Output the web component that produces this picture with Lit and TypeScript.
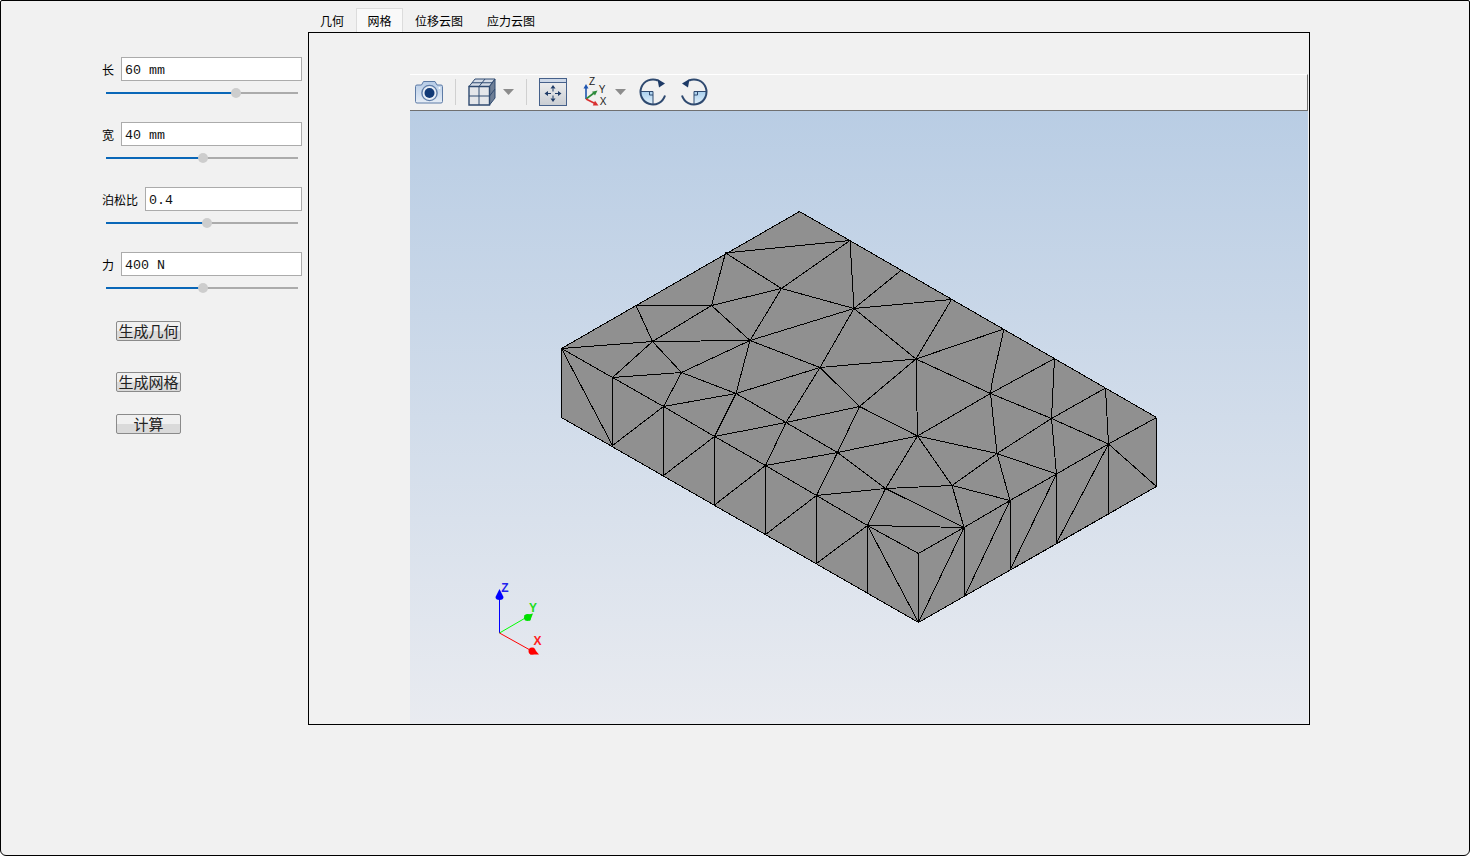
import { LitElement, html, css, svg } from 'lit';
import { customElement, state } from 'lit/decorators.js';

// mesh vertices, in page coordinates (the svg viewBox uses the same ones)
const V: Record<string, [number, number]> = {
	T: [799.5, 211.5], R: [1156.5, 417.5], Rb: [1156.5, 486.5], F: [918.5, 622.5], Lb: [561.5, 417.5], L: [561.5, 348.5],
	C: [918.5, 553.5],
	A1: [850, 240.5], A2: [725.5, 253], A3: [636, 305.5], B1: [901.5, 270], B2: [951.5, 299.5], B3: [1004, 329],
	B3m: [992.5, 380], B4: [1054.5, 358.5], B5: [1105.5, 388],
	N1: [781.5, 288.5], N2: [854, 308.5], N3: [711.5, 305.5], N4: [750, 340.5], N5: [652.5, 341.5], N6: [820, 367.5],
	N7: [681.5, 372.5], N8: [612.5, 377.5], N9: [736, 393.5], N10: [663.5, 406.5], N11: [859.5, 406.5], N12: [786, 422.5],
	N13: [714.5, 436.5], N14: [916, 359], N15: [990.5, 393.5], N16: [1051.5, 418.5], N17: [1108.5, 444], N18: [917.5, 436],
	N19: [997, 453.5], N20: [1056.5, 474], N21: [1010, 500.5], N22: [952, 485.5], N23: [964, 527.5], N24: [765.5, 465.5],
	N25: [816.5, 495.5], N26: [867.5, 525.5], N27: [837.5, 452.5], N28: [885.5, 488.5],
	b1: [612.5, 445.5], b2: [663.5, 475.5], b3: [714.5, 505], b4: [765.5, 534.5], b5: [816.5, 563.5], b6: [867.5, 592.5],
	b7: [964.5, 596.5], b8: [1010, 570], b9: [1056.5, 543], b10: [1108.5, 513],
};

const EDGES = `T-R T-L L-Lb Lb-F F-Rb Rb-R L-N8 N8-N10 N10-N13 N13-N24 N24-N25 N25-N26 N26-C C-N23 N23-N21 N21-N20 N20-N17 N17-R
L-N5 L-b1 N8-b1 N8-N5 N8-N7 N5-N7 N5-N4 N5-A3 A3-N3 N3-N5 N3-A2 N3-N4 N3-N1 A2-N1 A2-A1 N1-A1 N1-N2 N1-N4 N2-A1 N4-N2
N4-N7 N4-N6 N4-N9 N7-N9 N7-N10 N10-N9 N9-N6 N9-N12 N9-N13 N6-N12 N6-N11 N12-N11 N2-N6 N6-N14 N11-N14 N11-N18 N2-N14
N2-B1 N2-B2 N14-B2 N14-B3 N14-N15 N14-N18 B3-B3m B3m-N15 N15-B4 N15-N16 N15-N18 N15-N19 N16-B4 N16-B5 N17-B5 N16-N17
N18-N19 N19-N16 N19-N20 N16-N20 N19-N22 N19-N21 N22-N21 N22-N23 N18-N22 N18-N28 N18-N27 N28-N23 N28-N22 N28-N26 N27-N28
N27-N25 N27-N12 N27-N24 N27-N11 N12-N24 N12-N13 N25-N28 N26-N23 N10-b1 N10-b2 N13-b2 N13-b3 N24-b3 N24-b4 N25-b4 N25-b5
N26-b5 N26-b6 N26-F C-F N23-F N23-b7 N21-b7 N21-b8 N20-b8 N20-b9 N17-b9 N17-b10 N17-Rb`
	.split(/\s+/)
	.map((e) => e.split('-'));

const SLIDERS = [
	{ label: '长', value: '60 mm', pos: 67.7 },
	{ label: '宽', value: '40 mm', pos: 50.5 },
	{ label: '泊松比', value: '0.4', pos: 52.6 },
	{ label: '力', value: '400 N', pos: 50.5 },
];

const TABS = ['几何', '网格', '位移云图', '应力云图'];

const NAVY = '#2f4a70';

const rotateIcon = (mirror: boolean) => svg`
	<svg class="icon" viewBox="0 0 28 28">
		<defs>
			<linearGradient id="q${mirror ? 'm' : 'n'}" x1="0" y1="0" x2="0" y2="1">
				<stop offset="0" stop-color="#a9d0ee" />
				<stop offset="1" stop-color="#e4f1fa" />
			</linearGradient>
		</defs>
		<g transform=${mirror ? 'translate(28 0) scale(-1 1)' : 'translate(0 0)'}>
			<path d="M1.5 13.5H14V26.5A12.5 12.5 0 0 1 1.5 13.5Z" fill="url(#q${mirror ? 'm' : 'n'})" />
			<path d="M26 17.5A12.5 12.5 0 1 1 19 2.5" fill="none" stroke=${NAVY} stroke-width="2" />
			<path d="M1.5 13.5H14V26M10.5 13.5V17H14" fill="none" stroke=${NAVY} stroke-width="1" />
			<path d="M18.5 1L26 5.5L20 9.5Z" fill="#1d3a66" />
		</g>
	</svg>`;

@customElement('app-root')
export class AppRoot extends LitElement {
	static styles = css`
		:host {
			display: block;
			width: 1470px;
			height: 856px;
			font-family: 'Noto Sans CJK SC', 'Liberation Sans', sans-serif;
		}

		.window {
			box-sizing: border-box;
			display: flex;
			width: 1470px;
			height: 856px;
			background: #f1f1f1;
			border: 1px solid #000;
			border-radius: 2px 2px 6px 6px;
			padding-top: 7px;
		}

		.side {
			box-sizing: border-box;
			width: 307px;
			padding: 49px 6px 0 101px;
		}

		.group {
			margin-bottom: 28px;
		}

		.row {
			display: flex;
			align-items: center;
			gap: 7px;
			height: 24px;
			font-size: 12px;
			line-height: 24px;
			color: #000;
		}

		.row span {
			margin-top: 2px;
		}

		.row input {
			flex: 1;
			min-width: 0;
			box-sizing: border-box;
			height: 24px;
			padding: 3px 3px 1px;
			border: 1px solid #ababab;
			outline: 1px solid #fff;
			outline-offset: -2px;
			background: #fff;
			font-family: 'Liberation Mono', monospace;
			font-size: 13.33px;
			color: #111;
			border-radius: 0;
		}

		.slider {
			position: relative;
			height: 2px;
			margin: 11px 4px 0;
			background: #ababab;
		}

		.fill {
			height: 2px;
			background: #0a67b8;
		}

		.thumb {
			position: absolute;
			top: -4px;
			width: 10px;
			height: 10px;
			margin-left: -5px;
			border-radius: 50%;
			background: #cdcdcd;
		}

		.btns {
			display: flex;
			flex-direction: column;
			align-items: flex-start;
			padding: 4px 0 0 14px;
		}

		.btns button {
			box-sizing: border-box;
			width: 65px;
			height: 20px;
			padding: 0;
			border: 1px solid #8a8a8a;
			border-radius: 2px;
			background: linear-gradient(#f0f0f0 0 50%, #dadada 50% 100%);
			font-family: inherit;
			font-size: 15px;
			font-weight: 400;
			line-height: 18px;
			color: #222;
		}

		.btn-mesh {
			margin-top: 31px;
		}

		.btn-calc {
			margin-top: 22px;
		}

		.main {
			width: 1002px;
		}

		.tabs {
			display: flex;
			height: 24px;
			font-size: 12px;
			line-height: 25px;
			color: #000;
		}

		.tab {
			padding: 0 12px;
			text-align: center;
			box-sizing: border-box;
		}

		.tab.on {
			background: #f9f9f9;
			border: 1px solid #dcdcdc;
			border-bottom: none;
			padding: 0 10.5px;
			line-height: 23px;
		}

		.frame {
			box-sizing: border-box;
			height: 693px;
			border: 1px solid #000;
			padding: 41px 0 0 101px;
		}

		.viewer {
			width: 898px;
		}

		.toolbar {
			box-sizing: border-box;
			display: flex;
			align-items: center;
			height: 37px;
			padding: 0 0 1px 5px;
			background: #f1f1f1;
			border-top: 1px solid #fff;
			border-right: 1px solid #707070;
			border-bottom: 1px solid #707070;
		}

		.icon {
			display: block;
			flex: none;
			width: 28px;
			height: 28px;
			overflow: visible;
		}

		.axes {
			width: 23px;
			margin-left: 17px;
		}

		.sep {
			flex: none;
			width: 1px;
			height: 26px;
			margin: 0 12px;
			background: #d0d0d0;
		}

		.caret {
			flex: none;
			width: 11px;
			height: 6px;
			margin-left: 7px;
			background: #8c8c8c;
			clip-path: polygon(0 0, 100% 0, 50% 100%);
		}

		.axes + .caret {
			margin-left: 8px;
		}

		.rot-a,
		.rot-b {
			flex: none;
			margin-left: 13px;
		}

		.canvas {
			height: 613px;
			background: linear-gradient(#b9cde4, #e9ebf0);
		}

		.canvas svg {
			display: block;
			width: 898px;
			height: 613px;
		}

		.triad text {
			font-family: 'Liberation Sans', sans-serif;
			font-size: 12px;
			font-weight: bold;
			text-anchor: middle;
		}

		.axes text {
			font-family: 'Liberation Sans', sans-serif;
			font-size: 10px;
			fill: #222;
			text-anchor: middle;
		}
	`;

	@state() tab = 1;

	renderMesh() {
		const outline = ['T', 'R', 'Rb', 'F', 'Lb', 'L'].map((k) => V[k].join(',')).join(' ');
		return svg`
			<polygon points=${outline} fill="#909090" />
			<g stroke="#000" stroke-width="1" shape-rendering="crispEdges">
				${EDGES.map(([a, b]) => svg`<line x1=${V[a][0]} y1=${V[a][1]} x2=${V[b][0]} y2=${V[b][1]} />`)}
			</g>`;
	}

	renderTriad() {
		return svg`
			<g class="triad">
				<path d="M499.5 633V596" stroke="#0000ff" stroke-width="1" />
				<path d="M499.5 589L503.5 597Q503.5 600 499.5 600Q495.5 600 495.5 597Z" fill="#0000ff" />
				<text x="505" y="592" fill="#2222ee">Z</text>
				<path d="M499.5 633L527 617" stroke="#00ff00" stroke-width="1" />
				<circle cx="527.5" cy="617.5" r="3.5" fill="#00e000" />
				<path d="M533 613.5L530 621L524 615.5Z" fill="#00e000" />
				<text x="533" y="611.5" fill="#22dd22">Y</text>
				<path d="M499.5 633L530 650" stroke="#ff0000" stroke-width="1" />
				<circle cx="532" cy="651" r="3.5" fill="#ff0000" />
				<path d="M539 654.5L530 654.5L533 647.5Z" fill="#ff0000" />
				<text x="537.5" y="645" fill="#ff2020">X</text>
			</g>`;
	}

	renderToolbar() {
		return html`<div class="toolbar">
			<svg class="icon" viewBox="0 0 28 28">
				<defs>
					<linearGradient id="cam" x1="0" y1="0" x2="0" y2="1">
						<stop offset="0" stop-color="#b5cbe6" />
						<stop offset="1" stop-color="#e6edf6" />
					</linearGradient>
				</defs>
				<path
					d="M2 7H6.5L8.5 3.5H20L22 7H26Q27.5 7 27.5 8.5V23.5Q27.5 25 26 25H2Q0.5 25 0.5 23.5V8.5Q0.5 7 2 7Z"
					fill="url(#cam)"
					stroke="#5d7ba6"
				/>
				<circle cx="14.5" cy="15" r="7.6" fill="#e8eef6" stroke="#5f7da8" stroke-width="1.4" />
				<circle cx="14.5" cy="15" r="5" fill="#123a76" />
				<circle cx="24.5" cy="10" r="1" fill="#fff" />
			</svg>
			<div class="sep"></div>
			<svg class="icon" viewBox="0 0 28 28">
				<path d="M1 8.5L7 1H27L21.5 8.5Z" fill="#d4dbe6" stroke=${NAVY} />
				<path d="M21.5 8.5L27 1V20L21.5 27Z" fill="#6f7f96" stroke=${NAVY} />
				<path d="M1 8.5H21.5V27H1Z" fill="#e4e6ea" stroke=${NAVY} stroke-width="1.4" />
				<path d="M11 8.5V27M1 18H21.5M4 4.75H24.5M11 8.5L17 1M21.5 18L27 11" fill="none" stroke=${NAVY} />
			</svg>
			<div class="caret"></div>
			<div class="sep"></div>
			<svg class="icon" viewBox="0 0 28 28">
				<defs>
					<linearGradient id="fit" x1="0" y1="0" x2="0" y2="1">
						<stop offset="0" stop-color="#f2f2f2" />
						<stop offset="1" stop-color="#c9cdd3" />
					</linearGradient>
				</defs>
				<rect x="0.5" y="0.5" width="27" height="27" fill="url(#fit)" stroke="#45608a" />
				<rect x="1" y="1" width="26" height="3.5" fill="#cdd8e8" />
				<path d="M1 4.5H27" stroke="#45608a" />
				<path
					d="M14 7L16.5 10.5H11.5ZM14 24L16.5 20.5H11.5ZM5.5 15.5L9 13V18ZM22.5 15.5L19 13V18Z"
					fill="#1f3c68"
				/>
				<path d="M14 10.5V13.5M14 17.5V20.5M9 15.5H12M16 15.5H19" stroke="#1f3c68" />
			</svg>
			<svg class="icon axes" viewBox="0 0 23 28">
				<path d="M2 21V9" stroke="#1f55b0" stroke-width="1.6" />
				<path d="M2 6L4.5 10.5H-0.5Z" fill="#1f55b0" />
				<path d="M2 21L10 15" stroke="#2e8b3c" stroke-width="1.6" />
				<path d="M13.5 12.5L11 17.5L8 13.8Z" fill="#2e8b3c" />
				<path d="M2 21L11 25.5" stroke="#d93030" stroke-width="1.6" />
				<path d="M14.5 27.5L8.8 27.5L11 22.8Z" fill="#d93030" />
				<text x="8" y="6.5">Z</text>
				<text x="18" y="14.5">Y</text>
				<text x="19" y="26.5">X</text>
			</svg>
			<div class="caret"></div>
			<div class="rot-a">${rotateIcon(false)}</div>
			<div class="rot-b">${rotateIcon(true)}</div>
		</div>`;
	}

	render() {
		return html`<div class="window">
			<div class="side">
				${SLIDERS.map(
					(s) => html`<div class="group">
						<div class="row"><span>${s.label}</span><input .value=${s.value} /></div>
						<div class="slider">
							<div class="fill" style="width: ${s.pos}%"></div>
							<div class="thumb" style="left: ${s.pos}%"></div>
						</div>
					</div>`
				)}
				<div class="btns">
					<button>生成几何</button>
					<button class="btn-mesh">生成网格</button>
					<button class="btn-calc">计算</button>
				</div>
			</div>
			<div class="main">
				<div class="tabs">
					${TABS.map(
						(t, i) => html`<div class="tab ${i === this.tab ? 'on' : ''}" @click=${() => (this.tab = i)}>${t}</div>`
					)}
				</div>
				<div class="frame">
					<div class="viewer">
						${this.renderToolbar()}
						<div class="canvas">
							<svg viewBox="410 111 898 613">${this.renderMesh()}${this.renderTriad()}</svg>
						</div>
					</div>
				</div>
			</div>
		</div>`;
	}
}
